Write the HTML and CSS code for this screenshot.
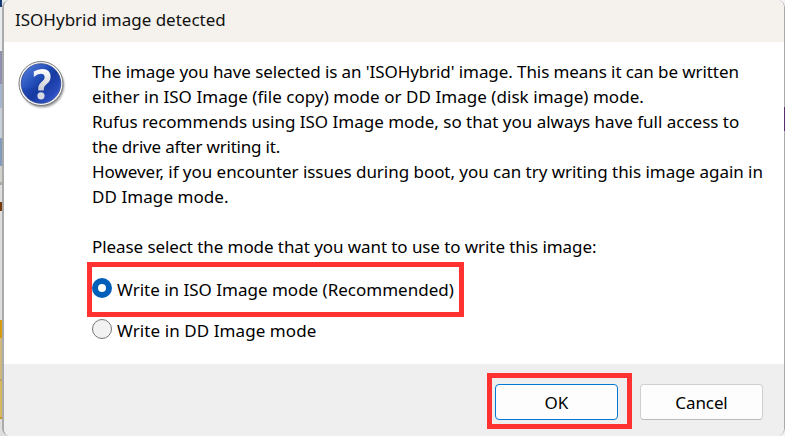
FILE: index.html
```html
<!DOCTYPE html>
<html lang="en">
<head>
<meta charset="utf-8">
<title>ISOHybrid image detected</title>
<link rel="stylesheet" href="styles.css">
</head>
<body>
<main class="dialog">
  <header class="titlebar"><span class="title">ISOHybrid image detected</span></header>
  <section class="content">
    <svg class="question" viewBox="0 0 50 52" aria-hidden="true">
      <defs>
        <linearGradient id="ball" x1="0" y1="0" x2="1" y2="1"><stop offset="0" stop-color="#6186df"/><stop offset=".38" stop-color="#2450bb"/><stop offset=".55" stop-color="#1739a0"/><stop offset="1" stop-color="#4f70ef"/></linearGradient>
        <linearGradient id="mark" x1="0" y1="0" x2="0" y2="1"><stop offset="0" stop-color="#fff"/><stop offset="1" stop-color="#c9cbd4"/></linearGradient>
        <filter id="soft" x="-20%" y="-20%" width="140%" height="140%"><feGaussianBlur stdDeviation="1"/></filter>
      </defs>
      <circle cx="25.2" cy="26.5" r="21.8" fill="#555" opacity=".65" filter="url(#soft)"/>
      <circle cx="24" cy="24.5" r="22" fill="#f7f7f7" stroke="#77797d" stroke-width="1"/>
      <circle cx="24" cy="24.5" r="19.8" fill="url(#ball)" stroke="#233f8b" stroke-width=".8"/>
      <path d="M5 29C13 32 33 25 42 16C45 31 37 43 24 43C14 43 7 37 5 29Z" fill="#1739a3" opacity=".35"/>
      <path d="M16.8 12.6Q20.5 10 25.2 10C30.8 10 33.6 13 33.6 17.6C33.6 22 31 24.2 28.6 26.2C27 27.6 26.8 29 26.8 31.5H21.2C21 27.3 22 25.2 24.5 23C26.5 21.2 27.6 20 27.6 18.2C27.6 15.8 26.2 14.8 23.8 14.8Q20.5 14.8 16.8 18Z" fill="url(#mark)"/>
      <circle cx="24" cy="36.8" r="3.6" fill="#d9dbe2"/>
    </svg>
    <div class="message">
      <p class="line l1">The image you have selected is an 'ISOHybrid' image. This means it can be written</p>
      <p class="line l2">either in ISO Image (file copy) mode or DD Image (disk image) mode.</p>
      <p class="line l3">Rufus recommends using ISO Image mode, so that you always have full access to</p>
      <p class="line l4">the drive after writing it.</p>
      <p class="line l5">However, if you encounter issues during boot, you can try writing this image again in</p>
      <p class="line l6">DD Image mode.</p>
      <p class="line l7">Please select the mode that you want to use to write this image:</p>
      <div class="option chosen"><i class="radio checked"></i><span class="r1">Write in ISO Image mode (Recommended)</span></div>
      <div class="option"><i class="radio"></i><span class="r2">Write in DD Image mode</span></div>
    </div>
  </section>
  <footer class="actions">
    <div class="highlight"><button class="button primary">OK</button></div>
    <button class="button cancel">Cancel</button>
  </footer>
</main>
<i class="edge-mark"></i>
<i class="sliver top"></i>
<i class="sliver mid"></i>
</body>
</html>
```
FILE: styles.css
```css
* { box-sizing: border-box; }
body {
  margin: 0; width: 785px; height: 436px; overflow: hidden; position: relative;
  padding-left: 2px;
  font: 17px/25px "Noto Sans", "Open Sans", sans-serif; color: #000;
  background: linear-gradient(#e9ecef 0 51px, #9090ad 51px 84px, #a5b6cc 84px 108px, #c8d0d9 108px 138px, #849bbc 138px 166px, #d3d1cc 166px 182px, #aaa 182px 185px, #dedede 185px 320px, #d69a0c 320px 338px, #cfb77e 338px 379px, #b9a268 379px 381px, #d9b960 381px 417px, #c99520 417px 419px, #dedede 419px) 0 0 / 20px 436px no-repeat #f2f2f2;
}
.dialog {
  width: 783px; height: 436px; overflow: hidden; background: #fff;
  border: solid #aaa; border-width: 0 1px 0 2px; border-radius: 8px;
  display: flex; flex-direction: column;
}
.titlebar { height: 42px; flex: none; background: #f5f1ed; padding: 7px 0 0 11px; }
.title { font-size: 17px; letter-spacing: 0; color: #111; white-space: nowrap; }
.content { height: 322px; flex: none; display: flex; }
.question { width: 50px; height: 52px; margin: 17px 23px 0 13px; flex: none; }
.message { padding-top: 17px; margin-left: 2px; }
.line { margin: 0; height: 25px; white-space: nowrap; }
.l1 { letter-spacing: -.085px; }
.l2 { letter-spacing: .045px; }
.l3 { letter-spacing: -.01px; }
.l4 { letter-spacing: -.2px; }
.l5 { letter-spacing: -.038px; }
.l6 { letter-spacing: .07px; }
.l7 { margin-top: 25px; letter-spacing: -.08px; }
.option { height: 25px; display: flex; align-items: center; gap: 5px; white-space: nowrap; margin-top: 1px; }
.chosen { height: 55px; width: 377px; margin: 3px 0 0 -5px; border: 5px solid #ff3131; }
.r2 { letter-spacing: .08px; }
.radio { width: 20px; height: 20px; margin-bottom: 3px; border: 1px solid #777; border-radius: 50%; background: #f2f2f2; flex: none; }
.checked { border: 6px solid #005fb8; background: #fff; }
.actions { height: 72px; background: #efefef; display: flex; justify-content: flex-end; padding: 9px 21px 0 0; }
.highlight { width: 145px; height: 56px; border: 5px solid #ff3131; padding: 6px 0 0 3px; margin-right: 8px; }
.button { width: 123px; height: 36px; padding: 0; display: block; border: 1px solid #d0d0d0; border-bottom-color: #bbb; border-radius: 4px; background: #fdfdfd; font: inherit; color: #000; }
.primary { border-color: #0078d4; }
.cancel { margin-top: 11px; letter-spacing: -.1px; }
.edge-mark { position: absolute; right: 0; top: 107px; width: 1px; height: 24px; background: #5b2d71; }
.sliver { position: absolute; left: 0; width: 2px; }
.top { top: 0; height: 7px; background: #173c74; }
.mid { top: 202px; height: 9px; background: #753b0c; }
```
